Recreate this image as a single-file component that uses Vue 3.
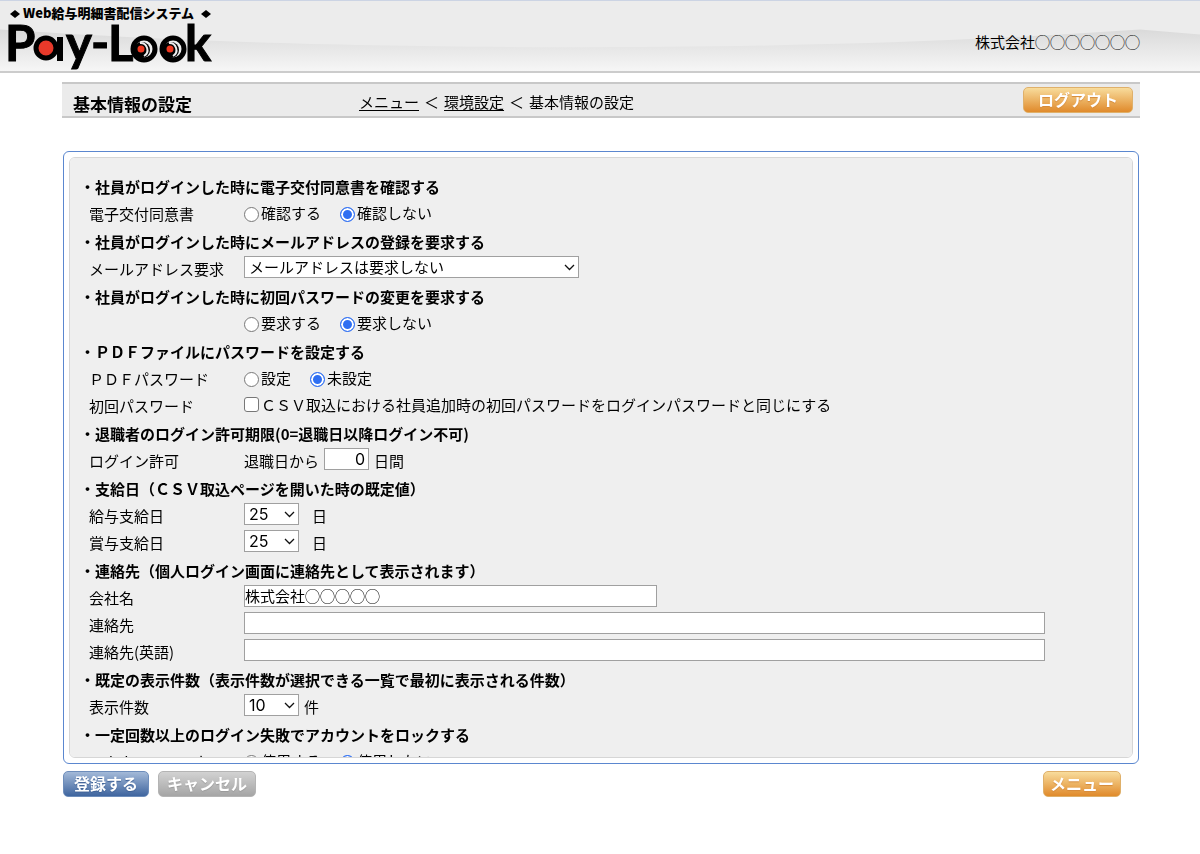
<script setup>
import { reactive } from 'vue'

const form = reactive({
  consent: 'no',
  mail: 'none',
  firstPassword: 'no',
  pdf: 'no',
  samePassword: false,
  loginDays: '0',
  salaryDay: '25',
  bonusDay: '25',
  company: '株式会社◯◯◯◯◯',
  contact: '',
  contactEn: '',
  pageSize: '10',
  lock: 'no',
})

const days = Array.from({ length: 31 }, (_, i) => String(i + 1))
const yesNo = (yes, no) => [{ value: 'yes', text: yes }, { value: 'no', text: no }]

const sections = [
  {
    title: '社員がログインした時に電子交付同意書を確認する',
    rows: [{ key: 'consent', label: '電子交付同意書', type: 'radio', options: yesNo('確認する', '確認しない') }],
  },
  {
    title: '社員がログインした時にメールアドレスの登録を要求する',
    rows: [{
      key: 'mail', label: 'メールアドレス要求', type: 'select', size: 'wide',
      options: [{ value: 'none', text: 'メールアドレスは要求しない' }, { value: 'ask', text: 'メールアドレスを要求する' }],
    }],
  },
  {
    title: '社員がログインした時に初回パスワードの変更を要求する',
    rows: [{ key: 'firstPassword', label: '', type: 'radio', options: yesNo('要求する', '要求しない') }],
  },
  {
    title: 'ＰＤＦファイルにパスワードを設定する',
    rows: [
      { key: 'pdf', label: 'ＰＤＦパスワード', type: 'radio', options: yesNo('設定', '未設定') },
      { key: 'samePassword', label: '初回パスワード', type: 'check', text: 'ＣＳＶ取込における社員追加時の初回パスワードをログインパスワードと同じにする' },
    ],
  },
  {
    title: '退職者のログイン許可期限(0=退職日以降ログイン不可)',
    rows: [{ key: 'loginDays', label: 'ログイン許可', type: 'text', size: 'number', before: '退職日から', after: '日間' }],
  },
  {
    title: '支給日（ＣＳＶ取込ページを開いた時の既定値）',
    rows: [
      { key: 'salaryDay', label: '給与支給日', type: 'select', size: 'short', options: days.map((d) => ({ value: d, text: d })), after: '日', spaced: true },
      { key: 'bonusDay', label: '賞与支給日', type: 'select', size: 'short', options: days.map((d) => ({ value: d, text: d })), after: '日', spaced: true },
    ],
  },
  {
    title: '連絡先（個人ログイン画面に連絡先として表示されます）',
    rows: [
      { key: 'company', label: '会社名', type: 'text', size: 'medium' },
      { key: 'contact', label: '連絡先', type: 'text', size: 'full' },
      { key: 'contactEn', label: '連絡先(英語)', type: 'text', size: 'full' },
    ],
  },
  {
    title: '既定の表示件数（表示件数が選択できる一覧で最初に表示される件数）',
    rows: [{ key: 'pageSize', label: '表示件数', type: 'select', size: 'short', options: ['10', '20', '50'].map((d) => ({ value: d, text: d })), after: '件' }],
  },
  {
    title: '一定回数以上のログイン失敗でアカウントをロックする',
    rows: [{ key: 'lock', label: 'アカウントロック', type: 'radio', options: yesNo('使用する', '使用しない') }],
  },
]
</script>

<template>
  <div class="page">
    <header class="top">
      <svg class="swoosh" viewBox="0 0 1200 71" preserveAspectRatio="none" aria-hidden="true">
        <defs>
          <linearGradient id="swooshFill" x1="0" y1="0" x2="0" y2="1">
            <stop offset="0" stop-color="#dadada" />
            <stop offset="1" stop-color="#f6f6f6" />
          </linearGradient>
        </defs>
        <path d="M0 29 C150 39 300 46 560 47 C780 47 950 42 1140 29 L1200 34 V71 H0 Z" fill="url(#swooshFill)" />
      </svg>
      <svg class="brand" width="220" height="71" viewBox="0 0 220 71" role="img" aria-label="Web給与明細書配信システム Pay-Look">
        <path d="M10 13 l5 -4 l5 4 l-5 4z M201 13 l5 -4 l5 4 l-5 4z" />
        <text class="tagline" x="23" y="17">Web給与明細書配信システム</text>
        <text class="wordmark" y="60"><tspan x="5">P</tspan><tspan x="66">y</tspan><tspan x="91">-</tspan><tspan x="108">L</tspan><tspan x="185">k</tspan></text>
        <rect x="57" y="36" width="6" height="24" />
        <circle cx="46" cy="47" r="10" fill="#e8392a" stroke="#000" stroke-width="5" />
        <g v-for="x in [144, 173]" :key="x">
          <circle :cx="x" cy="48" r="11" fill="#eee" stroke="#000" stroke-width="5" />
          <circle :cx="x - 2" cy="49" r="8" />
          <path :d="`M${x - 4} 42 a7 7 0 0 1 4 13`" fill="none" stroke="#eee" stroke-width="2" />
          <circle :cx="x - 3" cy="48" r="3.5" fill="#f0371f" />
        </g>
      </svg>
      <div class="user">株式会社◯◯◯◯◯◯◯</div>
    </header>

    <main class="content">
      <div class="titlebar">
        <h1>基本情報の設定</h1>
        <nav class="crumbs" aria-label="パンくず">
          <a href="#">メニュー</a><span>＜</span><a href="#">環境設定</a><span>＜</span><span>基本情報の設定</span>
        </nav>
        <button type="button" class="btn orange logout">ログアウト</button>
      </div>

      <form @submit.prevent>
        <div class="frame">
          <div class="panel">
            <section v-for="s in sections" :key="s.title">
              <h2>・{{ s.title }}</h2>
              <div v-for="r in s.rows" :key="r.key" class="row">
                <span v-if="r.type === 'radio'" class="label">{{ r.label }}</span>
                <label v-else class="label" :for="r.key">{{ r.label }}</label>

                <div v-if="r.type === 'radio'" class="choices" role="radiogroup" :aria-label="r.label || s.title">
                  <label v-for="o in r.options" :key="o.value" class="choice">
                    <input v-model="form[r.key]" type="radio" :name="r.key" :value="o.value">{{ o.text }}
                  </label>
                </div>

                <div v-else-if="r.type === 'check'" class="choices">
                  <label class="choice">
                    <input :id="r.key" v-model="form[r.key]" type="checkbox">{{ r.text }}
                  </label>
                </div>

                <template v-else>
                  <span v-if="r.before" class="before">{{ r.before }}</span>
                  <div v-if="r.type === 'select'" class="field" :class="r.size">
                    <select :id="r.key" v-model="form[r.key]">
                      <option v-for="o in r.options" :key="o.value" :value="o.value">{{ o.text }}</option>
                    </select>
                    <svg class="chevron" width="11" height="7" viewBox="0 0 11 7" aria-hidden="true">
                      <path d="M1 1 L5.5 5.5 L10 1" fill="none" stroke="#111" stroke-width="1.3" />
                    </svg>
                  </div>
                  <div v-else class="field" :class="r.size">
                    <input :id="r.key" v-model="form[r.key]" type="text">
                  </div>
                  <span v-if="r.after" class="after" :class="{ spaced: r.spaced }">{{ r.after }}</span>
                </template>
              </div>
            </section>
          </div>
        </div>

        <div class="actions">
          <button type="submit" class="btn blue">登録する</button>
          <button type="button" class="btn gray">キャンセル</button>
          <button type="button" class="btn orange menu">メニュー</button>
        </div>
      </form>
    </main>
  </div>
</template>

<style>
body { margin: 0; background: #fff; }
</style>

<style scoped>
.page {
  font-family: "Noto Sans CJK JP", sans-serif;
  font-size: 15px;
  line-height: 24px;
  color: #000;
}
.top {
  position: relative;
  display: flex;
  align-items: center;
  justify-content: space-between;
  height: 73px;
  box-sizing: border-box;
  padding-right: 60px;
  background: #ececec;
  border-top: 1px solid #ccd4e4;
  border-bottom: 2px solid #ccc;
}
.swoosh {
  position: absolute;
  inset: 0;
  width: 100%;
  height: 100%;
}
.brand { position: relative; display: block; }
.tagline { font: 900 13px "Noto Sans CJK JP", sans-serif; }
.wordmark { font: 700 49px Lato, sans-serif; stroke: #000; stroke-width: 1px; }
.user { position: relative; padding-top: 12px; }

.content { margin: 9px 60px 0 62px; }
.titlebar {
  display: grid;
  grid-template-columns: 297px 1fr auto;
  align-items: center;
  height: 36px;
  box-sizing: border-box;
  padding-right: 7px;
  background: #ebebeb;
  border-top: 2px solid #c8c8c8;
  border-bottom: 2px solid #c8c8c8;
}
.titlebar h1 {
  margin: 0;
  padding: 8px 0 0 11px;
  font-size: 17px;
  line-height: 24px;
  font-weight: 700;
}
.crumbs { display: flex; gap: 5px; padding-top: 4px; }
.crumbs a { color: inherit; text-underline-offset: 2px; }

.btn {
  height: 26px;
  padding: 0 10px 2px;
  border: 1px solid;
  border-radius: 5px;
  font-family: inherit;
  font-size: 16px;
  line-height: 22px;
  font-weight: 700;
  color: #fff;
  cursor: pointer;
}
.orange { border-color: #dfb06a; background: linear-gradient(#f8dc9c, #e08a2b); text-shadow: 0 1px 1px #d58a3a; }
.blue { border-color: #6d8dbb; background: linear-gradient(#a3b9d8, #3f659f); text-shadow: 0 1px 1px #3c5f94; }
.gray { border-color: #b4b4b4; background: linear-gradient(#d2d2d2, #a5a5a5); text-shadow: 0 1px 1px #999; }
.logout { padding: 0 14px 2px; }
.gray { padding: 0 8px 2px; }
.menu { margin-left: auto; padding: 0 6px 2px; }

.frame {
  height: calc(100vh - 241px);
  box-sizing: border-box;
  margin: 33px 1px 0 1px;
  padding: 5px;
  border: 1px solid #5b87cf;
  border-radius: 6px;
}
.panel {
  height: 100%;
  box-sizing: border-box;
  padding: 15px 10px;
  overflow-y: auto;
  scrollbar-width: none;
  background: #efefef;
  border: 1px solid #d6d6d6;
  border-radius: 6px;
}
.panel h2 {
  margin: 0;
  font-size: 15px;
  line-height: 28px;
  font-weight: 700;
}
.row { display: flex; height: 27px; line-height: 25px; }
.label { flex: 0 0 155px; padding-left: 9px; }
.choices { display: flex; gap: 19px; line-height: 21px; }
.choice { display: flex; align-items: center; height: 22px; }
.choice input {
  appearance: none;
  width: 15px;
  height: 15px;
  margin: 0 2px 0 0;
  border: 1px solid #777;
  background: #fff;
}
.choice input[type="radio"] { border-radius: 50%; margin-top: 4px; }
.choice input[type="checkbox"] { border-radius: 3px; }
.choice input:checked {
  border: 1px solid #2f6ff2;
  background: #2f6ff2;
  box-shadow: inset 0 0 0 2px #fff;
}
.field { position: relative; height: 22px; }
.field input,
.field select {
  display: block;
  width: 100%;
  height: 22px;
  box-sizing: border-box;
  margin: 0;
  border: 1px solid #a0a0a0;
  border-radius: 0;
  background: #fff;
  font-family: inherit;
  font-size: 15px;
  line-height: 20px;
  color: #000;
  appearance: none;
}
.field input { padding: 0 0 2px; }
.field select { padding: 0 4px 2px; }
.chevron { position: absolute; right: 4px; top: 8px; pointer-events: none; }
.wide { width: 335px; }
.short { width: 55px; }
.medium { width: 413px; }
.full { width: 801px; max-width: 100%; }
.number { width: 45px; }
.field.short select,
.field.number input { padding-bottom: 0; font-family: Inter, sans-serif; font-size: 16px; }
.field.number input { padding-right: 3px; text-align: right; }
.before { margin-right: 5px; }
.after { margin-left: 5px; }
.after.spaced { margin-left: 13px; }

.actions { display: flex; gap: 9px; margin: 7px 19px 0 1px; }
</style>
